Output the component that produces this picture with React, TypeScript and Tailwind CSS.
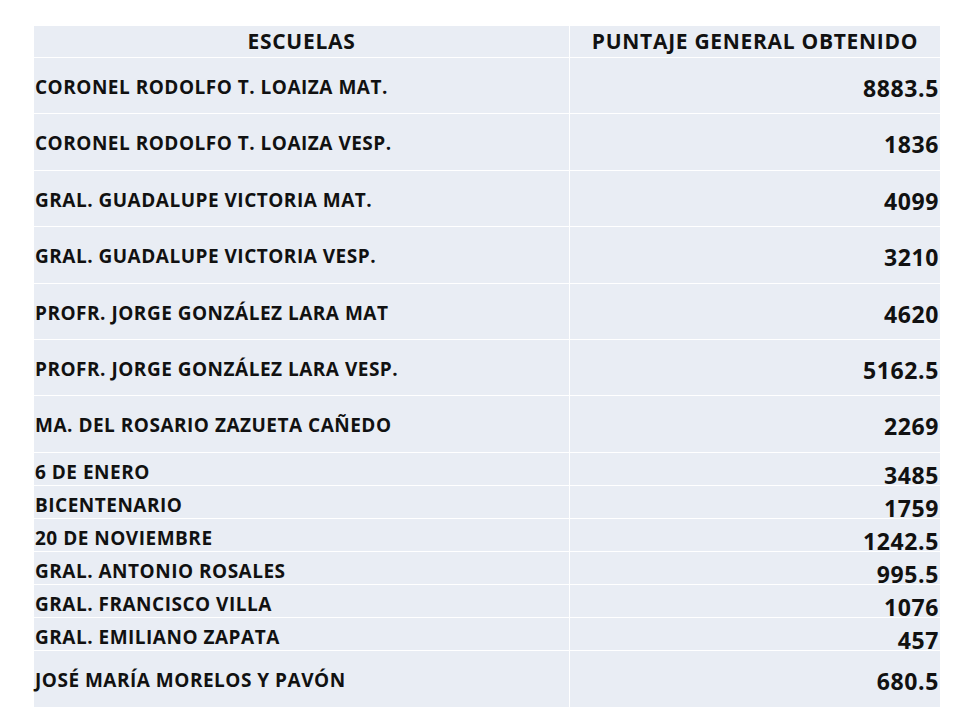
const rows: { name: string; score: string; tall: boolean }[] = [
  { name: 'CORONEL RODOLFO T. LOAIZA MAT.', score: '8883.5', tall: true },
  { name: 'CORONEL RODOLFO T. LOAIZA VESP.', score: '1836', tall: true },
  { name: 'GRAL. GUADALUPE VICTORIA MAT.', score: '4099', tall: true },
  { name: 'GRAL. GUADALUPE VICTORIA VESP.', score: '3210', tall: true },
  { name: 'PROFR. JORGE GONZÁLEZ LARA MAT', score: '4620', tall: true },
  { name: 'PROFR. JORGE GONZÁLEZ LARA VESP.', score: '5162.5', tall: true },
  { name: 'MA. DEL ROSARIO ZAZUETA CAÑEDO', score: '2269', tall: true },
  { name: '6 DE ENERO', score: '3485', tall: false },
  { name: 'BICENTENARIO', score: '1759', tall: false },
  { name: '20 DE NOVIEMBRE', score: '1242.5', tall: false },
  { name: 'GRAL. ANTONIO ROSALES', score: '995.5', tall: false },
  { name: 'GRAL. FRANCISCO VILLA', score: '1076', tall: false },
  { name: 'GRAL. EMILIANO ZAPATA', score: '457', tall: false },
  { name: 'JOSÉ MARÍA MORELOS Y PAVÓN', score: '680.5', tall: true },
];

export default function App() {
  return (
    <div
      className="h-[720px] w-[960px] bg-white pt-[26px] pl-[34px] text-[#111]"
      style={{ fontFamily: '"Open Sans", Lato, sans-serif' }}
    >
      <div className="w-[906px] bg-[#e9edf4]">
        <div className="grid h-[32px] grid-cols-[536px_370px] border-b border-white">
          <div className="flex items-center justify-center border-r border-white text-[21px] font-bold tracking-[0.7px]">
            ESCUELAS
          </div>
          <div className="flex items-center justify-center text-[21px] font-bold tracking-[0.7px]">
            PUNTAJE GENERAL OBTENIDO
          </div>
        </div>
        {rows.map((r, i) => (
          <div
            key={i}
            className={
              'grid grid-cols-[536px_370px] ' +
              (i < rows.length - 1 ? 'border-b border-white ' : '') +
              (r.tall ? 'h-[56.4px]' : 'h-[33px]')
            }
          >
            <div
              className={
                'flex items-center border-r border-white pl-[1px] text-[19px] font-bold tracking-[0.5px] ' +
                (r.tall ? 'pt-[3px]' : '')
              }
            >
              {r.name}
            </div>
            <div className="flex items-center justify-end pr-[1px] pt-[5px] text-[23px] font-bold tracking-[0.6px]">
              {r.score}
            </div>
          </div>
        ))}
      </div>
    </div>
  );
}
